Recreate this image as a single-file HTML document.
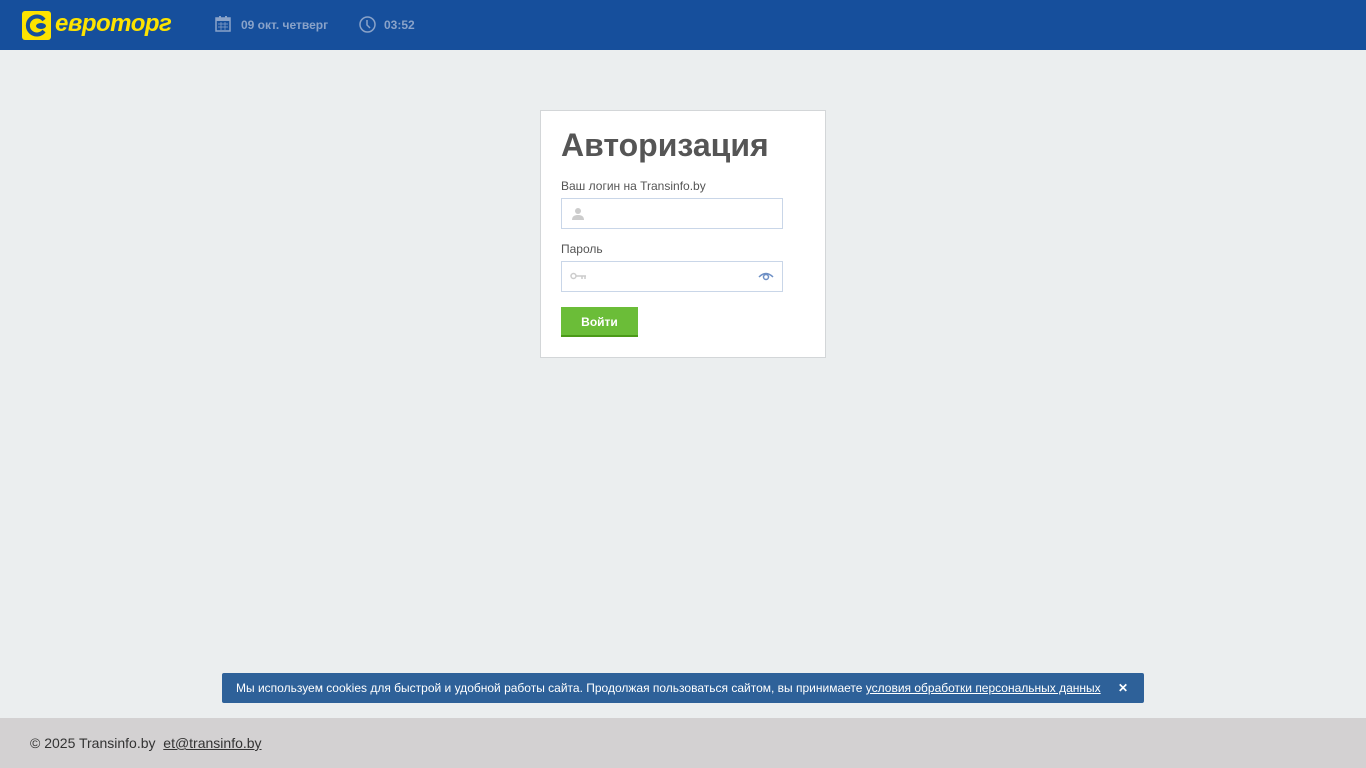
<!DOCTYPE html>
<html><head><meta charset="utf-8"><style>
*{box-sizing:border-box;margin:0;padding:0}
body{width:1366px;height:768px;background:#ebeeef;font-family:"Liberation Sans",Arial,sans-serif;position:relative;overflow:hidden}
.hdr{position:absolute;left:0;top:0;width:1366px;height:50px;background:#164f9c}
.logo{position:absolute;left:22px;top:11px;width:29px;height:29px;background:#fde300;border-radius:3px}
.lt{position:absolute;left:55px;top:10px;color:#fde300;font-size:24px;font-style:italic;font-weight:bold;letter-spacing:-0.5px}
.hi{position:absolute;top:18px;color:#8aa3c9;font-size:12px;font-weight:bold}
.card{position:absolute;left:540px;top:110px;width:286px;height:248px;background:#fff;border:1px solid #d3d6d8}
h1{position:absolute;left:20px;top:16px;font-size:32px;color:#555;font-weight:bold}
.lbl{position:absolute;left:20px;font-size:12px;color:#555}
.inp{position:absolute;left:20px;width:222px;height:31px;border:1px solid #c9d6e8;background:#fff}
.btn{position:absolute;left:20px;top:196px;width:77px;height:30px;background:#6bbd38;border-bottom:2px solid #4b9a18;color:#fff;font-size:12px;font-weight:bold;text-align:center;line-height:30px}
.ck{position:absolute;left:222px;top:673px;width:922px;height:30px;background:#2e6199;border-radius:2px;color:#fff;font-size:12px;line-height:30px;padding-left:14px}
.ck a{color:#fff}
.ft{position:absolute;left:0;top:718px;width:1366px;height:50px;background:#d3d1d2;font-size:14px;color:#333;line-height:50px;padding-left:30px}
.ft a{color:#333}
</style></head><body>
<div class="hdr">
<div class="logo"><svg width="29" height="29"><path d="M22 9 A9 9 0 1 0 22 20" stroke="#164f9c" stroke-width="4" fill="none"/><ellipse cx="19" cy="15" rx="5" ry="3" fill="#164f9c"/></svg></div>
<div class="lt">евроторг</div>
<svg style="position:absolute;left:215px;top:15px" width="17" height="17"><rect x="1" y="3" width="14" height="13" fill="none" stroke="#8aa3c9" stroke-width="1.5"/><rect x="1" y="3" width="14" height="3" fill="#8aa3c9"/><rect x="4" y="1" width="2" height="3" fill="#8aa3c9"/><rect x="10" y="1" width="2" height="3" fill="#8aa3c9"/><path d="M3 9h10M3 12h10M6 7v8M10 7v8" stroke="#8aa3c9" stroke-width="0.7"/></svg>
<div class="hi" style="left:241px">09 окт. четверг</div>
<svg style="position:absolute;left:359px;top:16px" width="17" height="17"><circle cx="8.5" cy="8.5" r="7.5" fill="none" stroke="#8aa3c9" stroke-width="1.5"/><path d="M8 4v5l3 3" stroke="#8aa3c9" stroke-width="1.5" fill="none"/></svg>
<div class="hi" style="left:384px">03:52</div>
</div>
<div class="card">
<h1>Авторизация</h1>
<div class="lbl" style="top:68px">Ваш логин на Transinfo.by</div>
<div class="inp" style="top:87px"><svg style="position:absolute;left:9px;top:8px" width="14" height="14"><circle cx="7" cy="4" r="3" fill="#ccc"/><path d="M1 13c0-4 3-5 6-5s6 1 6 5z" fill="#ccc"/></svg></div>
<div class="lbl" style="top:131px">Пароль</div>
<div class="inp" style="top:150px"><svg style="position:absolute;left:8px;top:10px" width="18" height="10"><circle cx="3.5" cy="4" r="2.5" fill="none" stroke="#ccc" stroke-width="1.5"/><path d="M6 4h10M12 4v3M15 4v3" stroke="#ccc" stroke-width="1.5"/></svg><svg style="position:absolute;left:196px;top:9px" width="16" height="10"><path d="M1 6Q8-1 15 6" stroke="#6d8fc5" stroke-width="1.5" fill="none"/><circle cx="8" cy="6" r="2.5" fill="none" stroke="#6d8fc5" stroke-width="1.5"/></svg></div>
<div class="btn">Войти</div>
</div>
<div class="ck">Мы используем cookies для быстрой и удобной работы сайта. Продолжая пользоваться сайтом, вы принимаете <a href="#">условия обработки персональных данных</a><span style="position:absolute;right:16px;font-weight:bold">✕</span></div>
<div class="ft">© 2025 Transinfo.by&nbsp; <a href="#">et@transinfo.by</a></div>
</body></html>
